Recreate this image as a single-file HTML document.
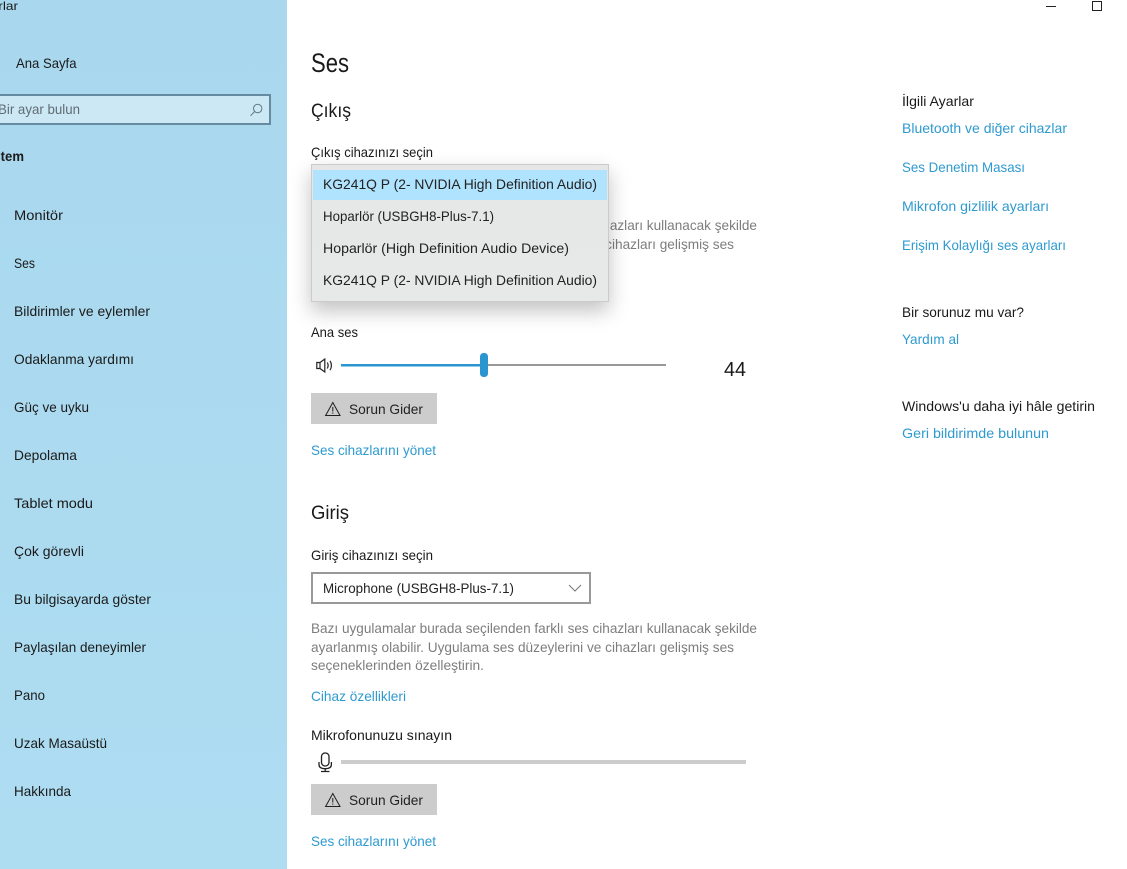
<!DOCTYPE html>
<html lang="tr">
<head>
<meta charset="utf-8">
<title>Ses</title>
<style>
html,body{margin:0;padding:0;width:1127px;height:869px;overflow:hidden;background:#fff}
svg{display:block;position:absolute;left:0;top:0}
text{font-family:"Liberation Sans","DejaVu Sans",sans-serif;font-size:14px;fill:#1a1a1a}
.g{fill:#7d7d7d}
.l{fill:#2e9ad0}
.n{fill:#222}
</style>
</head>
<body>
<svg width="1127" height="869" viewBox="0 0 1127 869" xmlns="http://www.w3.org/2000/svg">
<defs>
<linearGradient id="side" x1="0" y1="0" x2="0" y2="1"><stop offset="0" stop-color="#a9d8ee"/><stop offset="1" stop-color="#aeddf2"/></linearGradient>
<linearGradient id="dd" x1="0" y1="0" x2="0" y2="1"><stop offset="0" stop-color="#e6e6e6"/><stop offset="1" stop-color="#e7e9e9"/></linearGradient>
<filter id="sh" x="-20%" y="-20%" width="140%" height="160%"><feDropShadow dx="0" dy="9" stdDeviation="10" flood-color="#000" flood-opacity=".24"/></filter>
</defs>
<rect x="0" y="0" width="287" height="869" fill="url(#side)"/>
<text x="-25" y="10" font-size="12" textLength="43" lengthAdjust="spacingAndGlyphs" style="font-size:12px">Ayarlar</text>
<text x="16" y="68" textLength="60.500" lengthAdjust="spacingAndGlyphs">Ana Sayfa</text>
<rect x="-5" y="95" width="275" height="29" fill="#cde8f5" stroke="#668ba1" stroke-width="2"/>
<text x="-2" y="114" class="g" textLength="82" lengthAdjust="spacingAndGlyphs" style="fill:#5f6d75">Bir ayar bulun</text>
<g fill="none" stroke="#5f7686" stroke-width="1"><circle cx="257.700" cy="108.500" r="4.200"/><path d="M254.700 111.500 250.500 115.800"/></g>
<text x="-19" y="161" textLength="43" lengthAdjust="spacingAndGlyphs" style="font-weight:bold">Sistem</text>
<text x="14" y="220" textLength="49" lengthAdjust="spacingAndGlyphs">Monitör</text>
<text x="14" y="268" textLength="21" lengthAdjust="spacingAndGlyphs">Ses</text>
<text x="14" y="316" textLength="136" lengthAdjust="spacingAndGlyphs">Bildirimler ve eylemler</text>
<text x="14" y="364" textLength="120" lengthAdjust="spacingAndGlyphs">Odaklanma yardımı</text>
<text x="14" y="412" textLength="75" lengthAdjust="spacingAndGlyphs">Güç ve uyku</text>
<text x="14" y="460" textLength="63" lengthAdjust="spacingAndGlyphs">Depolama</text>
<text x="14" y="508" textLength="79" lengthAdjust="spacingAndGlyphs">Tablet modu</text>
<text x="14" y="556" textLength="70" lengthAdjust="spacingAndGlyphs">Çok görevli</text>
<text x="14" y="604" textLength="137" lengthAdjust="spacingAndGlyphs">Bu bilgisayarda göster</text>
<text x="14" y="652" textLength="132" lengthAdjust="spacingAndGlyphs">Paylaşılan deneyimler</text>
<text x="14" y="700" textLength="31" lengthAdjust="spacingAndGlyphs">Pano</text>
<text x="14" y="748" textLength="93" lengthAdjust="spacingAndGlyphs">Uzak Masaüstü</text>
<text x="14" y="796" textLength="57" lengthAdjust="spacingAndGlyphs">Hakkında</text>

<text x="311" y="72" textLength="38" lengthAdjust="spacingAndGlyphs" style="font-size:27px">Ses</text>
<text x="311" y="117" textLength="40" lengthAdjust="spacingAndGlyphs" style="font-size:19px">Çıkış</text>
<text x="311" y="157" textLength="122" lengthAdjust="spacingAndGlyphs">Çıkış cihazınızı seçin</text>

<text x="311" y="230" class="g" textLength="446" lengthAdjust="spacingAndGlyphs">Bazı uygulamalar burada seçilenden farklı ses cihazları kullanacak şekilde</text>
<text x="311" y="249" class="g" textLength="423" lengthAdjust="spacingAndGlyphs">ayarlanmış olabilir. Uygulama ses düzeylerini ve cihazları gelişmiş ses</text>

<rect x="311.500" y="164.500" width="297" height="137" fill="url(#dd)" stroke="#cbcbcb" filter="url(#sh)"/>
<rect x="313" y="170" width="294" height="30" fill="#b0e3fd"/>
<text x="323" y="189" class="n" textLength="274" lengthAdjust="spacingAndGlyphs">KG241Q P (2- NVIDIA High Definition Audio)</text>
<text x="323" y="221" class="n" textLength="171" lengthAdjust="spacingAndGlyphs">Hoparlör (USBGH8-Plus-7.1)</text>
<text x="323" y="253" class="n" textLength="246" lengthAdjust="spacingAndGlyphs">Hoparlör (High Definition Audio Device)</text>
<text x="323" y="285" class="n" textLength="274" lengthAdjust="spacingAndGlyphs">KG241Q P (2- NVIDIA High Definition Audio)</text>

<text x="311" y="337" textLength="47" lengthAdjust="spacingAndGlyphs">Ana ses</text>
<g fill="none" stroke="#222" stroke-width="1.200"><path d="M316.800 362.500h3.200v6h-3.200zM320 362.500l4.800-3.500v13l-4.800-3.500"/><path d="M327.300 362.500c1 1.800 1 4.200 0 6"/><path d="M330 360.800c1.900 2.800 1.900 6.600 0 9.400"/></g>
<rect x="341" y="364" width="325" height="2" fill="#999"/>
<rect x="341" y="364" width="142" height="2.500" fill="#2b95cf"/>
<rect x="480" y="353" width="8" height="24" rx="3.500" fill="#2b95cf"/>
<text x="724" y="376" textLength="22" lengthAdjust="spacingAndGlyphs" style="font-size:20px">44</text>

<rect x="311" y="393" width="126" height="31" fill="#cccccc"/>
<g fill="none" stroke="#1f1f1f" stroke-width="1"><path d="M332.800 402.500 340 415.500H325.600Z"/><path d="M332.800 407v4.500M332.800 412.500v1.200"/></g>
<text x="349" y="414" class="n" textLength="74" lengthAdjust="spacingAndGlyphs">Sorun Gider</text>
<text x="311" y="455" class="l" textLength="125" lengthAdjust="spacingAndGlyphs">Ses cihazlarını yönet</text>

<text x="311" y="519" textLength="38" lengthAdjust="spacingAndGlyphs" style="font-size:19px">Giriş</text>
<text x="311" y="560" textLength="122" lengthAdjust="spacingAndGlyphs">Giriş cihazınızı seçin</text>
<rect x="312" y="573" width="278" height="30" fill="#fff" stroke="#999" stroke-width="2"/>
<text x="323" y="593" class="n" textLength="191" lengthAdjust="spacingAndGlyphs">Microphone (USBGH8-Plus-7.1)</text>
<path d="M569 585 575 591 581 585" fill="none" stroke="#777" stroke-width="1"/>
<text x="311" y="633" class="g" textLength="446" lengthAdjust="spacingAndGlyphs">Bazı uygulamalar burada seçilenden farklı ses cihazları kullanacak şekilde</text>
<text x="311" y="652" class="g" textLength="423" lengthAdjust="spacingAndGlyphs">ayarlanmış olabilir. Uygulama ses düzeylerini ve cihazları gelişmiş ses</text>
<text x="311" y="670" class="g" textLength="173" lengthAdjust="spacingAndGlyphs">seçeneklerinden özelleştirin.</text>
<text x="311" y="701" class="l" textLength="95" lengthAdjust="spacingAndGlyphs">Cihaz özellikleri</text>
<text x="311" y="740" textLength="141" lengthAdjust="spacingAndGlyphs">Mikrofonunuzu sınayın</text>
<g fill="none" stroke="#222" stroke-width="1.300"><rect x="321.500" y="753" width="7.500" height="13" rx="3.500"/><path d="M319 762v2.500c0 2.800 2.500 4.200 6.200 4.200s6.200-1.400 6.200-4.200V762M325.200 768.700v2.800M321 771.500h8.500"/></g>
<rect x="341" y="760" width="405" height="4" fill="#cccccc"/>
<rect x="311" y="784" width="126" height="31" fill="#cccccc"/>
<g fill="none" stroke="#1f1f1f" stroke-width="1"><path d="M332.800 793.500 340 806.500H325.600Z"/><path d="M332.800 798v4.500M332.800 803.500v1.200"/></g>
<text x="349" y="805" class="n" textLength="74" lengthAdjust="spacingAndGlyphs">Sorun Gider</text>
<text x="311" y="846" class="l" textLength="125" lengthAdjust="spacingAndGlyphs">Ses cihazlarını yönet</text>

<text x="902" y="106" textLength="72" lengthAdjust="spacingAndGlyphs">İlgili Ayarlar</text>
<text x="902" y="133" class="l" textLength="165" lengthAdjust="spacingAndGlyphs">Bluetooth ve diğer cihazlar</text>
<text x="902" y="172" class="l" textLength="123" lengthAdjust="spacingAndGlyphs">Ses Denetim Masası</text>
<text x="902" y="211" class="l" textLength="147" lengthAdjust="spacingAndGlyphs">Mikrofon gizlilik ayarları</text>
<text x="902" y="250" class="l" textLength="164" lengthAdjust="spacingAndGlyphs">Erişim Kolaylığı ses ayarları</text>
<text x="902" y="317" textLength="122" lengthAdjust="spacingAndGlyphs">Bir sorunuz mu var?</text>
<text x="902" y="344" class="l" textLength="57" lengthAdjust="spacingAndGlyphs">Yardım al</text>
<text x="902" y="411" textLength="193" lengthAdjust="spacingAndGlyphs">Windows'u daha iyi hâle getirin</text>
<text x="902" y="438" class="l" textLength="147" lengthAdjust="spacingAndGlyphs">Geri bildirimde bulunun</text>

<rect x="1046" y="6" width="10" height="1" fill="#222"/>
<rect x="1092.500" y="1.500" width="9" height="9" fill="none" stroke="#222"/>
</svg>
</body>
</html>
